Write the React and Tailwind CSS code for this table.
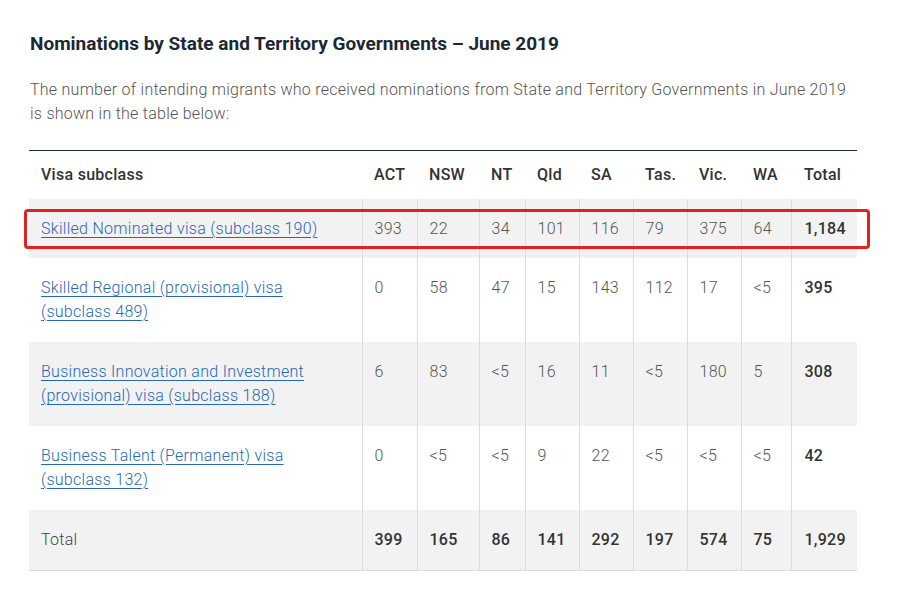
import React from "react";

const cols = ["ACT", "NSW", "NT", "Qld", "SA", "Tas.", "Vic.", "WA", "Total"];

const rows = [
  { name: "Skilled Nominated visa (subclass 190)", v: ["393", "22", "34", "101", "116", "79", "375", "64", "1,184"], gray: true },
  { name: "Skilled Regional (provisional) visa (subclass 489)", v: ["0", "58", "47", "15", "143", "112", "17", "<5", "395"], gray: false },
  { name: "Business Innovation and Investment (provisional) visa (subclass 188)", v: ["6", "83", "<5", "16", "11", "<5", "180", "5", "308"], gray: true },
  { name: "Business Talent (Permanent) visa (subclass 132)", v: ["0", "<5", "<5", "9", "22", "<5", "<5", "<5", "42"], gray: false },
];

const totals = ["399", "165", "86", "141", "292", "197", "574", "75", "1,929"];

export default function App() {
  return (
    <div className="w-[910px] h-[597px] bg-white font-['Roboto',sans-serif] text-[#555]">
      <div className="pl-[29px] pt-[31px] w-[857px]">
        <h2 className="text-[19px] leading-[26px] font-bold text-[#1b2836] pl-px">
          Nominations by State and Territory Governments – June 2019
        </h2>
        <p className="mt-[21px] text-[16px] leading-[24px] font-light tracking-[0.26px] text-[#555] pl-px">
          The number of intending migrants who received nominations from State and Territory Governments in June 2019 is shown in the table below:
        </p>
        <div className="relative mt-[24px]">
          <table className="table-fixed border-collapse w-[828px] text-[16px] leading-[24px] tracking-[0.28px]">
            <colgroup>
              <col className="w-[333px]" />
              <col className="w-[55px]" />
              <col className="w-[62px]" />
              <col className="w-[46px]" />
              <col className="w-[54px]" />
              <col className="w-[54px]" />
              <col className="w-[54px]" />
              <col className="w-[54px]" />
              <col className="w-[50px]" />
              <col className="w-[66px]" />
            </colgroup>
            <thead>
              <tr className="border-t border-[#1d2b36]">
                <th className="text-left font-medium text-[#333] pl-[12px] pt-[12px] pb-[12px]">Visa subclass</th>
                {cols.map((c, j) => (
                  <th key={c} className={"text-left font-medium text-[#333] py-[12px] " + (j === 8 ? "pl-[13px]" : "pl-[12px]")}>{c}</th>
                ))}
              </tr>
            </thead>
            <tbody>
              {rows.map((r, i) => (
                <tr key={i} className={r.gray ? "bg-[#f2f2f2]" : "bg-white"}>
                  <td className={"align-top pl-[12px] pr-[12px] pt-[18px] " + (i === 0 ? "pb-[17px]" : "pb-[18px]")}>
                    <a href="#" className="text-[#2767b8] underline decoration-[#2767b8] underline-offset-[3px] font-light">
                      {r.name}
                    </a>
                  </td>
                  {r.v.map((x, j) => (
                    <td
                      key={j}
                      className={
                        "align-top border-l border-[#dcdcdc] pt-[18px] " +
                        (i === 0 ? "pb-[17px] " : "pb-[18px] ") +
                        (j === 8 ? "pl-[13px] font-medium text-[#333]" : "pl-[12px] font-light text-[#555]")
                      }
                    >
                      {x}
                    </td>
                  ))}
                </tr>
              ))}
              <tr className="bg-[#f2f2f2] border-b border-[#dcdcdc]">
                <td className="pl-[12px] pt-[18px] pb-[18px] font-light text-[#444]">Total</td>
                {totals.map((x, j) => (
                  <td key={j} className={"border-l border-[#dcdcdc] pt-[18px] pb-[18px] font-medium text-[#333] " + (j === 8 ? "pl-[13px]" : "pl-[12px]")}>
                    {x}
                  </td>
                ))}
              </tr>
            </tbody>
          </table>
          <div className="absolute left-[-5px] top-[59px] w-[846px] h-[40px] border-[3px] border-[#e3211e] rounded-[4px] pointer-events-none" />
        </div>
      </div>
    </div>
  );
}
